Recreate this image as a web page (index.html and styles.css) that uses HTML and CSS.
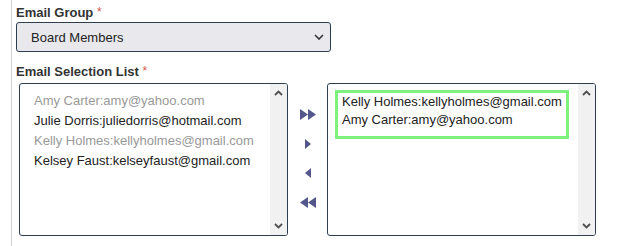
FILE: index.html
```html
<!DOCTYPE html>
<html>
<head>
    <title>Email Selection</title>
    <link rel="stylesheet" href="styles.css">
</head>
<body>
<div class="panel">
    <label class="field-label">Email Group <span class="req">*</span></label>
    <div class="group-select">
        <span>Board Members</span>
        <svg class="chev" width="10" height="6" viewBox="0 0 10 6"><path d="M1 1 L5 5 L9 1" fill="none" stroke="#333" stroke-width="1.6"/></svg>
    </div>

    <label class="field-label second">Email Selection List <span class="req">*</span></label>
    <div class="picker">
        <div class="listbox">
            <div class="items">
                <div class="item used">Amy Carter:amy@yahoo.com</div>
                <div class="item">Julie Dorris:juliedorris@hotmail.com</div>
                <div class="item used">Kelly Holmes:kellyholmes@gmail.com</div>
                <div class="item">Kelsey Faust:kelseyfaust@gmail.com</div>
            </div>
            <div class="scrollbar">
                <svg width="9" height="6" viewBox="0 0 9 6"><path d="M1 5 L4.5 1.5 L8 5" fill="none" stroke="#505050" stroke-width="1.8"/></svg>
                <svg width="9" height="6" viewBox="0 0 9 6"><path d="M1 1 L4.5 4.5 L8 1" fill="none" stroke="#505050" stroke-width="1.8"/></svg>
            </div>
        </div>

        <div class="moves">
            <svg width="16" height="11" viewBox="0 0 16 11"><path d="M0 0 L8 5.5 L0 11 Z M8 0 L16 5.5 L8 11 Z" fill="#53578a"/></svg>
            <svg width="6" height="10" viewBox="0 0 6 10"><path d="M0 0 L6 5 L0 10 Z" fill="#53578a"/></svg>
            <svg width="6" height="10" viewBox="0 0 6 10"><path d="M6 0 L0 5 L6 10 Z" fill="#53578a"/></svg>
            <svg width="16" height="11" viewBox="0 0 16 11"><path d="M16 0 L8 5.5 L16 11 Z M8 0 L0 5.5 L8 11 Z" fill="#53578a"/></svg>
        </div>

        <div class="listbox">
            <div class="items">
                <div class="chosen">
                    <div class="item">Kelly Holmes:kellyholmes@gmail.com</div>
                    <div class="item">Amy Carter:amy@yahoo.com</div>
                </div>
            </div>
            <div class="scrollbar">
                <svg width="9" height="6" viewBox="0 0 9 6"><path d="M1 5 L4.5 1.5 L8 5" fill="none" stroke="#505050" stroke-width="1.8"/></svg>
                <svg width="9" height="6" viewBox="0 0 9 6"><path d="M1 1 L4.5 4.5 L8 1" fill="none" stroke="#505050" stroke-width="1.8"/></svg>
            </div>
        </div>
    </div>
</div>
</body>
</html>
```

FILE: styles.css
```css
body {
    margin: 0;
    background-color: #fff;
    font-family: "Liberation Sans", Arial, sans-serif;
    font-size: 13px;
    color: #222;
}

.panel {
    margin-left: 11px;
    border-left: 1px solid #d0d0d0;
    padding: 5px 0 10px 4px;
    height: 231px;
}

.field-label {
    display: block;
    font-weight: bold;
    color: #333;
    line-height: 15px;
}

.field-label.second {
    margin-top: 12px;
}

.req {
    color: #d9534f;
    font-size: 12px;
    font-weight: normal;
    vertical-align: top;
}

.group-select {
    margin-top: 2px;
    width: 315px;
    box-sizing: border-box;
    height: 30px;
    background-color: #e9e9ed;
    border: 1px solid #2e3d4f;
    border-radius: 3px;
    display: flex;
    align-items: center;
    justify-content: space-between;
    padding: 0 6px 0 14px;
    color: #222;
}

.picker {
    display: flex;
    margin-top: 4px;
    margin-left: 3px;
}

.listbox {
    width: 269px;
    height: 153px;
    box-sizing: border-box;
    border: 1px solid #2e3d4f;
    border-radius: 3px;
    display: flex;
    overflow: hidden;
}

.items {
    flex: 1;
    padding: 7px 0 0 14px;
}

.item {
    line-height: 20px;
    white-space: nowrap;
}

.item.used {
    color: #999;
}

.chosen {
    width: fit-content;
    margin: -1px 0 0 -7px;
    border: 3px solid #7df27d;
    padding: 0 4px 7px 4px;
}

.chosen .item {
    line-height: 18px;
}

.scrollbar {
    width: 17px;
    background-color: #f1f1f1;
    display: flex;
    flex-direction: column;
    justify-content: space-between;
    align-items: center;
    padding: 6px 0 6px;
}

.moves {
    width: 39px;
    display: flex;
    flex-direction: column;
    align-items: center;
    padding-top: 26px;
    gap: 19px;
}
```
